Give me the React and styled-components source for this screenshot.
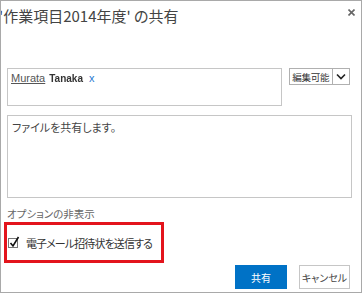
import React from 'react';
import styled, { createGlobalStyle } from 'styled-components';

const Global = createGlobalStyle`
    html, body { margin: 0; padding: 0; background: #fff; }
    body {
        font-family: "Noto Sans CJK JP", "Noto Sans", sans-serif;
        font-feature-settings: "palt";
    }
`;

const Dialog = styled.div`
    width: 362px;
    height: 293px;
    box-sizing: border-box;
    border: 1px solid #a9a9a9;
    background: #fff;
    padding: 0 11px 0 6px;
    display: flex;
    flex-direction: column;
    overflow: hidden;
`;

const Header = styled.div`
    height: 67px;
    display: flex;
    justify-content: space-between;
    align-items: flex-start;
    margin-left: -8px;
`;

const Title = styled.h1`
    margin: 5px 0 0;
    font-size: 15px;
    line-height: 20px;
    font-weight: 400;
    color: #444;
    white-space: nowrap;
`;

const Close = styled.button`
    border: none;
    background: none;
    padding: 0;
    margin: 8px -5px 0 0;
    width: 7px;
    height: 7px;
    display: flex;
`;

const PickerRow = styled.div`
    display: flex;
    align-items: flex-start;
    gap: 7px;
`;

const Picker = styled.div`
    width: 277px;
    height: 38px;
    box-sizing: border-box;
    border: 1px solid #c6c6c6;
    padding: 2px 3px;
    display: flex;
    align-items: baseline;
    gap: 4px;
    font-size: 11px;
    line-height: 14px;
    font-family: "Liberation Sans", "Noto Sans CJK JP", sans-serif;
`;

const Person = styled.span`
    color: #555;
    text-decoration: underline;
`;

const Hidden = styled.span`
    font-weight: 700;
    color: #333;
    font-size: 10px;
    filter: blur(0.7px);
`;

const Remove = styled.span`
    color: #2a7ad0;
    font-size: 11px;
    margin-left: 2px;
`;

const Select = styled.div`
    height: 17px;
    width: 61px;
    box-sizing: border-box;
    border: 1px solid #b0b0b0;
    display: flex;
    align-items: stretch;
    font-size: 9.5px;
    color: #333;
    white-space: nowrap;
`;

const SelectText = styled.span`
    flex: 1;
    display: flex;
    align-items: center;
    padding-left: 2px;
    letter-spacing: -0.3px;
    border-right: 1px solid #b0b0b0;
`;

const SelectArrow = styled.span`
    width: 16px;
    flex: none;
    display: flex;
    align-items: center;
    justify-content: center;
`;

const Message = styled.div`
    margin-top: 9px;
    width: 345px;
    height: 83px;
    box-sizing: border-box;
    border: 1px solid #c6c6c6;
    padding: 3px 4px;
    font-size: 11px;
    line-height: 16px;
    color: #444;
`;

const Options = styled.div`
    margin-top: 9px;
    font-size: 10.5px;
    line-height: 14px;
    color: #666;
`;

const Highlight = styled.div`
    margin: 1px 0 0 -3px;
    width: 160px;
    height: 41px;
    box-sizing: border-box;
    border: 3px solid #e3141c;
    padding-left: 1px;
    display: flex;
    align-items: center;
    gap: 8px;
`;

const Check = styled.span`
    width: 10px;
    height: 10px;
    box-sizing: border-box;
    border: 1px solid #777;
    position: relative;
    flex: none;
`;

const CheckLabel = styled.span`
    font-size: 11px;
    color: #333;
    white-space: nowrap;
    letter-spacing: -0.9px;
`;

const Buttons = styled.div`
    margin-top: 2px;
    display: flex;
    justify-content: flex-end;
    gap: 12px;
`;

const Button = styled.button`
    width: ${(p) => p.w}px;
    height: 24px;
    box-sizing: border-box;
    border: 1px solid ${(p) => (p.primary ? '#0072c6' : '#c6c6c6')};
    background: ${(p) => (p.primary ? '#0072c6' : '#fff')};
    color: ${(p) => (p.primary ? '#fff' : '#444')};
    font-family: inherit;
    font-feature-settings: "palt";
    font-size: 10px;
    padding: 0;
`;

const App = () => {
    return (
        <>
            <Global />
            <Dialog>
                <Header>
                    <Title>'作業項目2014年度' の共有</Title>
                    <Close>
                        <svg width="7" height="7" viewBox="0 0 7 7">
                            <path d="M0.5 0.5 L6.5 6.5 M6.5 0.5 L0.5 6.5" stroke="#666" strokeWidth="1.6" />
                        </svg>
                    </Close>
                </Header>
                <PickerRow>
                    <Picker>
                        <Person>Murata</Person>
                        <Hidden>Tanaka</Hidden>
                        <Remove>x</Remove>
                    </Picker>
                    <Select>
                        <SelectText>編集可能</SelectText>
                        <SelectArrow>
                            <svg width="10" height="7" viewBox="0 0 10 7">
                                <path d="M1 1.5 L5 5.5 L9 1.5" fill="none" stroke="#222" strokeWidth="1.6" />
                            </svg>
                        </SelectArrow>
                    </Select>
                </PickerRow>
                <Message>ファイルを共有します。</Message>
                <Options>オプションの非表示</Options>
                <Highlight>
                    <Check>
                        <svg width="11" height="12" viewBox="0 0 11 12" style={{ position: 'absolute', left: 0, top: -3 }}>
                            <path d="M1.5 7 L4 10 L9.5 1" fill="none" stroke="#111" strokeWidth="1.6" />
                        </svg>
                    </Check>
                    <CheckLabel>電子メール招待状を送信する</CheckLabel>
                </Highlight>
                <Buttons>
                    <Button primary w={52}>共有</Button>
                    <Button w={51}>キャンセル</Button>
                </Buttons>
            </Dialog>
        </>
    );
};

export default App;
